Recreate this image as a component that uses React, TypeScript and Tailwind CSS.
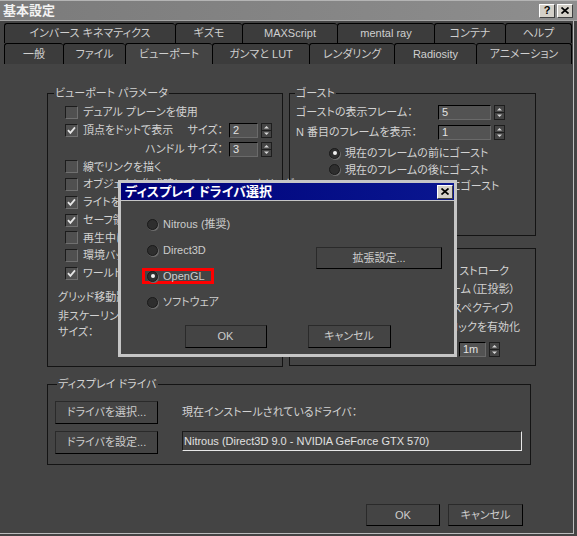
import React from 'react';

const FONT = "font-['Liberation_Sans','Noto_Sans_CJK_JP',sans-serif] [font-feature-settings:'palt']";

const row1Tabs: [string, string][] = [
  ['インバース キネマティクス', 'w-[171px]'],
  ['ギズモ', 'w-[67px]'],
  ['MAXScript', 'w-[95px]'],
  ['mental ray', 'w-[97px]'],
  ['コンテナ', 'w-[71px]'],
  ['ヘルプ', 'w-[67px]'],
];

const row2Tabs: [string, string][] = [
  ['一般', 'w-[59px]'],
  ['ファイル', 'w-[62px]'],
  ['ビューポート', 'w-[87px]'],
  ['ガンマと LUT', 'w-[97px]'],
  ['レンダリング', 'w-[85px]'],
  ['Radiosity', 'w-[82px]'],
  ['アニメーション', 'w-[96px]'],
];

function Check({ checked }: { checked?: boolean }) {
  return (
    <span className="w-[13px] h-[13px] shrink-0 flex items-center justify-center border border-t-[#1c1c1c] border-l-[#1c1c1c] border-r-[#707070] border-b-[#707070] bg-[#505050]">
      {checked && (
        <svg width="9" height="9" viewBox="0 0 9 9">
          <path d="M1 4.2 L3.4 6.8 L8 1.4" fill="none" stroke="#e6e6e6" strokeWidth="1.8" />
        </svg>
      )}
    </span>
  );
}

function Radio({ on }: { on?: boolean }) {
  return (
    <span className="w-[11px] h-[11px] shrink-0 rounded-full flex items-center justify-center bg-[#2e2e2e] border border-[#1a1a1a] shadow-[1px_1px_0_#6a6a6a]">
      {on && <span className="w-[4px] h-[4px] rounded-full bg-[#f0f0f0]" />}
    </span>
  );
}

function Spin({ value, box }: { value: string; box: string }) {
  return (
    <div className="flex items-center gap-[3px] shrink-0">
      <div className={`${box} bg-[#535353] border border-t-black border-l-black border-r-[#6a6a6a] border-b-[#6a6a6a] text-[#e2e2e2] pl-[3px] flex items-center leading-none`}>
        {value}
      </div>
      <svg width="11" height="15" viewBox="0 0 11 15" className="shrink-0">
        <rect x="0.5" y="0.5" width="10" height="14" fill="#454545" stroke="#1e1e1e" />
        <line x1="1" y1="7.5" x2="10" y2="7.5" stroke="#1e1e1e" />
        <path d="M3 5.5 L5.5 3 L8 5.5 Z" fill="#d8d8d8" />
        <path d="M3 9.5 L5.5 12 L8 9.5 Z" fill="#d8d8d8" />
      </svg>
    </div>
  );
}

function Btn({ children, className }: { children: React.ReactNode; className: string }) {
  return (
    <button className={`flex items-center justify-center bg-[#444] border border-t-[#2a2a2a] border-l-[#2a2a2a] border-r-black border-b-black text-[#cccccc] ${className}`}>
      {children}
    </button>
  );
}

function XGlyph() {
  return (
    <svg width="8" height="7" viewBox="0 0 8 7">
      <path d="M0.5 0.5 L7.5 6.5 M7.5 0.5 L0.5 6.5" stroke="#000" strokeWidth="1.7" />
    </svg>
  );
}

function TitleButton({ children }: { children: React.ReactNode }) {
  return (
    <div className="w-[16px] h-[14px] flex items-center justify-center bg-[#d4d0c8] border border-t-white border-l-white border-r-[#404040] border-b-[#404040] text-black font-bold text-[11px] leading-none">
      {children}
    </div>
  );
}

function Tab({ label, w, active, last }: { label: string; w: string; active?: boolean; last?: boolean }) {
  return (
    <div
      className={`${w} h-full flex items-center justify-center rounded-t-[3px] border-t border-l border-black ${last ? 'border-r' : ''} ${active ? 'bg-[#444]' : 'bg-[#3c3c3c]'} text-[#cfcfcf] whitespace-nowrap`}
    >
      {label}
    </div>
  );
}

export default function App() {
  return (
    <div className={`relative w-[577px] h-[536px] bg-[#444] flex flex-col text-[11px] text-[#d2d2d2] overflow-hidden ${FONT}`}>
      {/* title bar */}
      <div className="h-[21px] shrink-0 flex items-center justify-between pl-[3px] pr-[4px] bg-gradient-to-r from-[#7b7b7b] to-[#8e8e8e] border-t border-b border-t-[#b4b4b4] border-b-[#a6a6a6]">
        <span className="text-[13px] font-bold text-[#f2f2f2] leading-none">基本設定</span>
        <div className="flex gap-[2px]">
          <TitleButton>?</TitleButton>
          <TitleButton>
            <XGlyph />
          </TitleButton>
        </div>
      </div>

      <div className="w-[574px] h-[513px] border-r border-b border-[#bcbcbc] flex flex-col">
        {/* tabs */}
        <div className="mt-[2px] pl-[4px] flex flex-col">
          <div className="flex h-[20px]">
            {row1Tabs.map(([l, w], i) => (
              <Tab key={l} label={l} w={w} last={i === row1Tabs.length - 1} />
            ))}
          </div>
          <div className="flex h-[21px]">
            {row2Tabs.map(([l, w], i) => (
              <Tab key={l} label={l} w={w} active={l === 'ビューポート'} last={i === row2Tabs.length - 1} />
            ))}
          </div>
        </div>

        {/* pane */}
        <div className="flex-1 pt-[22px] pl-[47px] flex flex-col">
          <div className="flex gap-[6px]">
            {/* viewport parameters */}
            <fieldset className="w-[236px] h-[281px] min-w-0 p-0 m-0 border border-[#141414]">
              <legend className="ml-[6px] px-[1px] leading-[14px]">ビューポート パラメータ</legend>
              <div className="pt-[3px] flex flex-col whitespace-nowrap">
                <div className="h-[18px] flex items-center pl-[17px] gap-[5px]">
                  <Check />
                  <span>デュアル プレーンを使用</span>
                </div>
                <div className="h-[19px] flex items-center pl-[17px] pr-[10px] gap-[5px]">
                  <Check checked />
                  <span>頂点をドットで表示</span>
                  <span className="ml-auto mr-[1px]">サイズ：</span>
                  <Spin value="2" box="w-[29px] h-[15px]" />
                </div>
                <div className="h-[18px] flex items-center justify-end pr-[10px] gap-[5px]">
                  <span className="mr-[1px]">ハンドル サイズ：</span>
                  <Spin value="3" box="w-[29px] h-[15px]" />
                </div>
                {[
                  ['線でリンクを描く', false],
                  ['オブジェクト作成時にバックフェース カリング', false],
                  ['ライトを減衰', true],
                  ['セーフ領域にビューポートをマスク', true],
                  ['再生中に背景イメージを更新', false],
                  ['環境バックグラウンドをフィルタ', false],
                  ['ワールド座標軸を表示', true],
                ].map(([t, c]) => (
                  <div key={t as string} className="h-[17.75px] flex items-center pl-[17px] gap-[5px]">
                    <Check checked={c as boolean} />
                    <span>{t as string}</span>
                  </div>
                ))}
                <div className="mt-[6px] h-[18px] flex items-center pl-[10px]">グリッド移動距離：</div>
                <div className="mt-[2px] pl-[10px] leading-[16px]">
                  非スケーリング オブジェクト
                  <br />
                  サイズ：
                </div>
              </div>
            </fieldset>

            {/* right column */}
            <div className="w-[247px] flex flex-col">
              <fieldset className="h-[150px] min-w-0 p-0 m-0 border border-[#141414]">
                <legend className="ml-[5px] px-[1px] leading-[14px]">ゴースト</legend>
                <div className="pt-[3px] flex flex-col whitespace-nowrap">
                  <div className="h-[19px] flex items-center pl-[6px] pr-[30px]">
                    <span className="flex-1">ゴーストの表示フレーム：</span>
                    <Spin value="5" box="w-[53px] h-[15px]" />
                  </div>
                  <div className="mt-[1px] h-[19px] flex items-center pl-[6px] pr-[30px]">
                    <span className="flex-1">N 番目のフレームを表示：</span>
                    <Spin value="1" box="w-[53px] h-[15px]" />
                  </div>
                  <div className="mt-[3px] flex flex-col">
                    {['現在のフレームの前にゴースト', '現在のフレームの後にゴースト', '現在のフレームの前後にゴースト'].map((t, i) => (
                      <div key={t} className="h-[16.5px] flex items-center pl-[39px] gap-[5px]">
                        <Radio on={i === 0} />
                        <span>{t}</span>
                      </div>
                    ))}
                  </div>
                </div>
              </fieldset>

              <fieldset className="mt-[5px] h-[125px] min-w-0 p-0 m-0 border border-[#141414] overflow-hidden">
                <legend className="ml-[5px] px-[1px] leading-[14px]">マウス コントロール</legend>
                <div className="flex flex-col whitespace-nowrap">
                  <div className="mt-[7px] h-[18px] flex items-center justify-end pr-[26px]">
                    <span>中ボタン：</span>
                    <Radio on />
                    <span className="ml-[4px] mr-[22px]">パン/ズーム</span>
                    <Radio />
                    <span className="ml-[8px]">ストローク</span>
                  </div>
                  <div className="h-[19px] flex items-center justify-end pr-[20px]">マウス ポイントを中心にズーム（正投影）</div>
                  <div className="h-[19px] flex items-center justify-end pr-[20px]">マウス ポイントを中心にズーム（パースペクティブ）</div>
                  <div className="h-[18px] flex items-center justify-end pr-[15px]">右クリックでのドラッグ ロックを有効化</div>
                  <div className="mt-[5px] h-[17px] flex items-center justify-end pr-[35px] gap-[8px]">
                    <span>ホイール ズーム増分：</span>
                    <Spin value="1m" box="w-[27px] h-[15px]" />
                  </div>
                </div>
              </fieldset>
            </div>
          </div>

          {/* display driver */}
          <fieldset className="mt-[10px] w-[484px] h-[88px] min-w-0 p-0 m-0 border border-[#141414]">
            <legend className="ml-[9px] px-[1px] leading-[14px]">ディスプレイ ドライバ</legend>
            <div className="pt-[10px] pl-[7px] flex">
              <div className="w-[103px] flex flex-col gap-[7px]">
                <Btn className="h-[23px] w-[103px]">ドライバを選択...</Btn>
                <Btn className="h-[23px] w-[103px]">ドライバを設定...</Btn>
              </div>
              <div className="ml-[24px] flex flex-col">
                <div className="h-[23px] flex items-center">現在インストールされているドライバ：</div>
                <div className="mt-[7px] w-[340px] h-[20px] flex items-center pl-[1px] border border-t-[#1a1a1a] border-l-[#1a1a1a] border-r-[#e8e8e8] border-b-[#e8e8e8] text-[#e0e0e0] whitespace-nowrap">
                  Nitrous (Direct3D 9.0 - NVIDIA GeForce GTX 570)
                </div>
              </div>
            </div>
          </fieldset>
        </div>

        {/* OK / Cancel */}
        <div className="flex justify-end gap-[8px] pr-[50px] pb-[7px]">
          <Btn className="w-[74px] h-[22px]">OK</Btn>
          <Btn className="w-[75px] h-[22px]">キャンセル</Btn>
        </div>
      </div>

      {/* driver selection dialog */}
      <div className="absolute left-[118px] top-[180px] w-[339px] h-[177px] border-[3px] border-[#c6c6c6] bg-[#444] flex flex-col">
        <div className="h-[18px] shrink-0 flex items-center justify-between pl-[4px] pr-[1px] bg-gradient-to-r from-[#000078] to-[#0a1690] border-b border-[#c6c6c6]">
          <span className="text-[13px] font-bold text-white leading-none">ディスプレイ ドライバ選択</span>
          <TitleButton>
            <XGlyph />
          </TitleButton>
        </div>
        <div className="flex-1 flex flex-col">
          <div className="flex">
            <div className="pt-[15px] pl-[21px] flex flex-col items-start gap-[10px]">
              {['Nitrous (推奨)', 'Direct3D', 'OpenGL', 'ソフトウェア'].map((t) => (
                <div
                  key={t}
                  className={`h-[16px] flex items-center gap-[5px] pl-[2px] pr-[6px] border-[3px] ${t === 'OpenGL' ? 'border-[#ff0000]' : 'border-transparent'} leading-[10px] text-[#cccccc]`}
                >
                  <Radio on={t === 'OpenGL'} />
                  <span>{t}</span>
                </div>
              ))}
            </div>
            <Btn className="ml-auto mr-[12px] mt-[46px] w-[126px] h-[22px]">拡張設定...</Btn>
          </div>
          <div className="mt-[15px] flex justify-center gap-[41px]">
            <Btn className="w-[82px] h-[23px]">OK</Btn>
            <Btn className="w-[83px] h-[23px]">キャンセル</Btn>
          </div>
        </div>
      </div>
    </div>
  );
}
